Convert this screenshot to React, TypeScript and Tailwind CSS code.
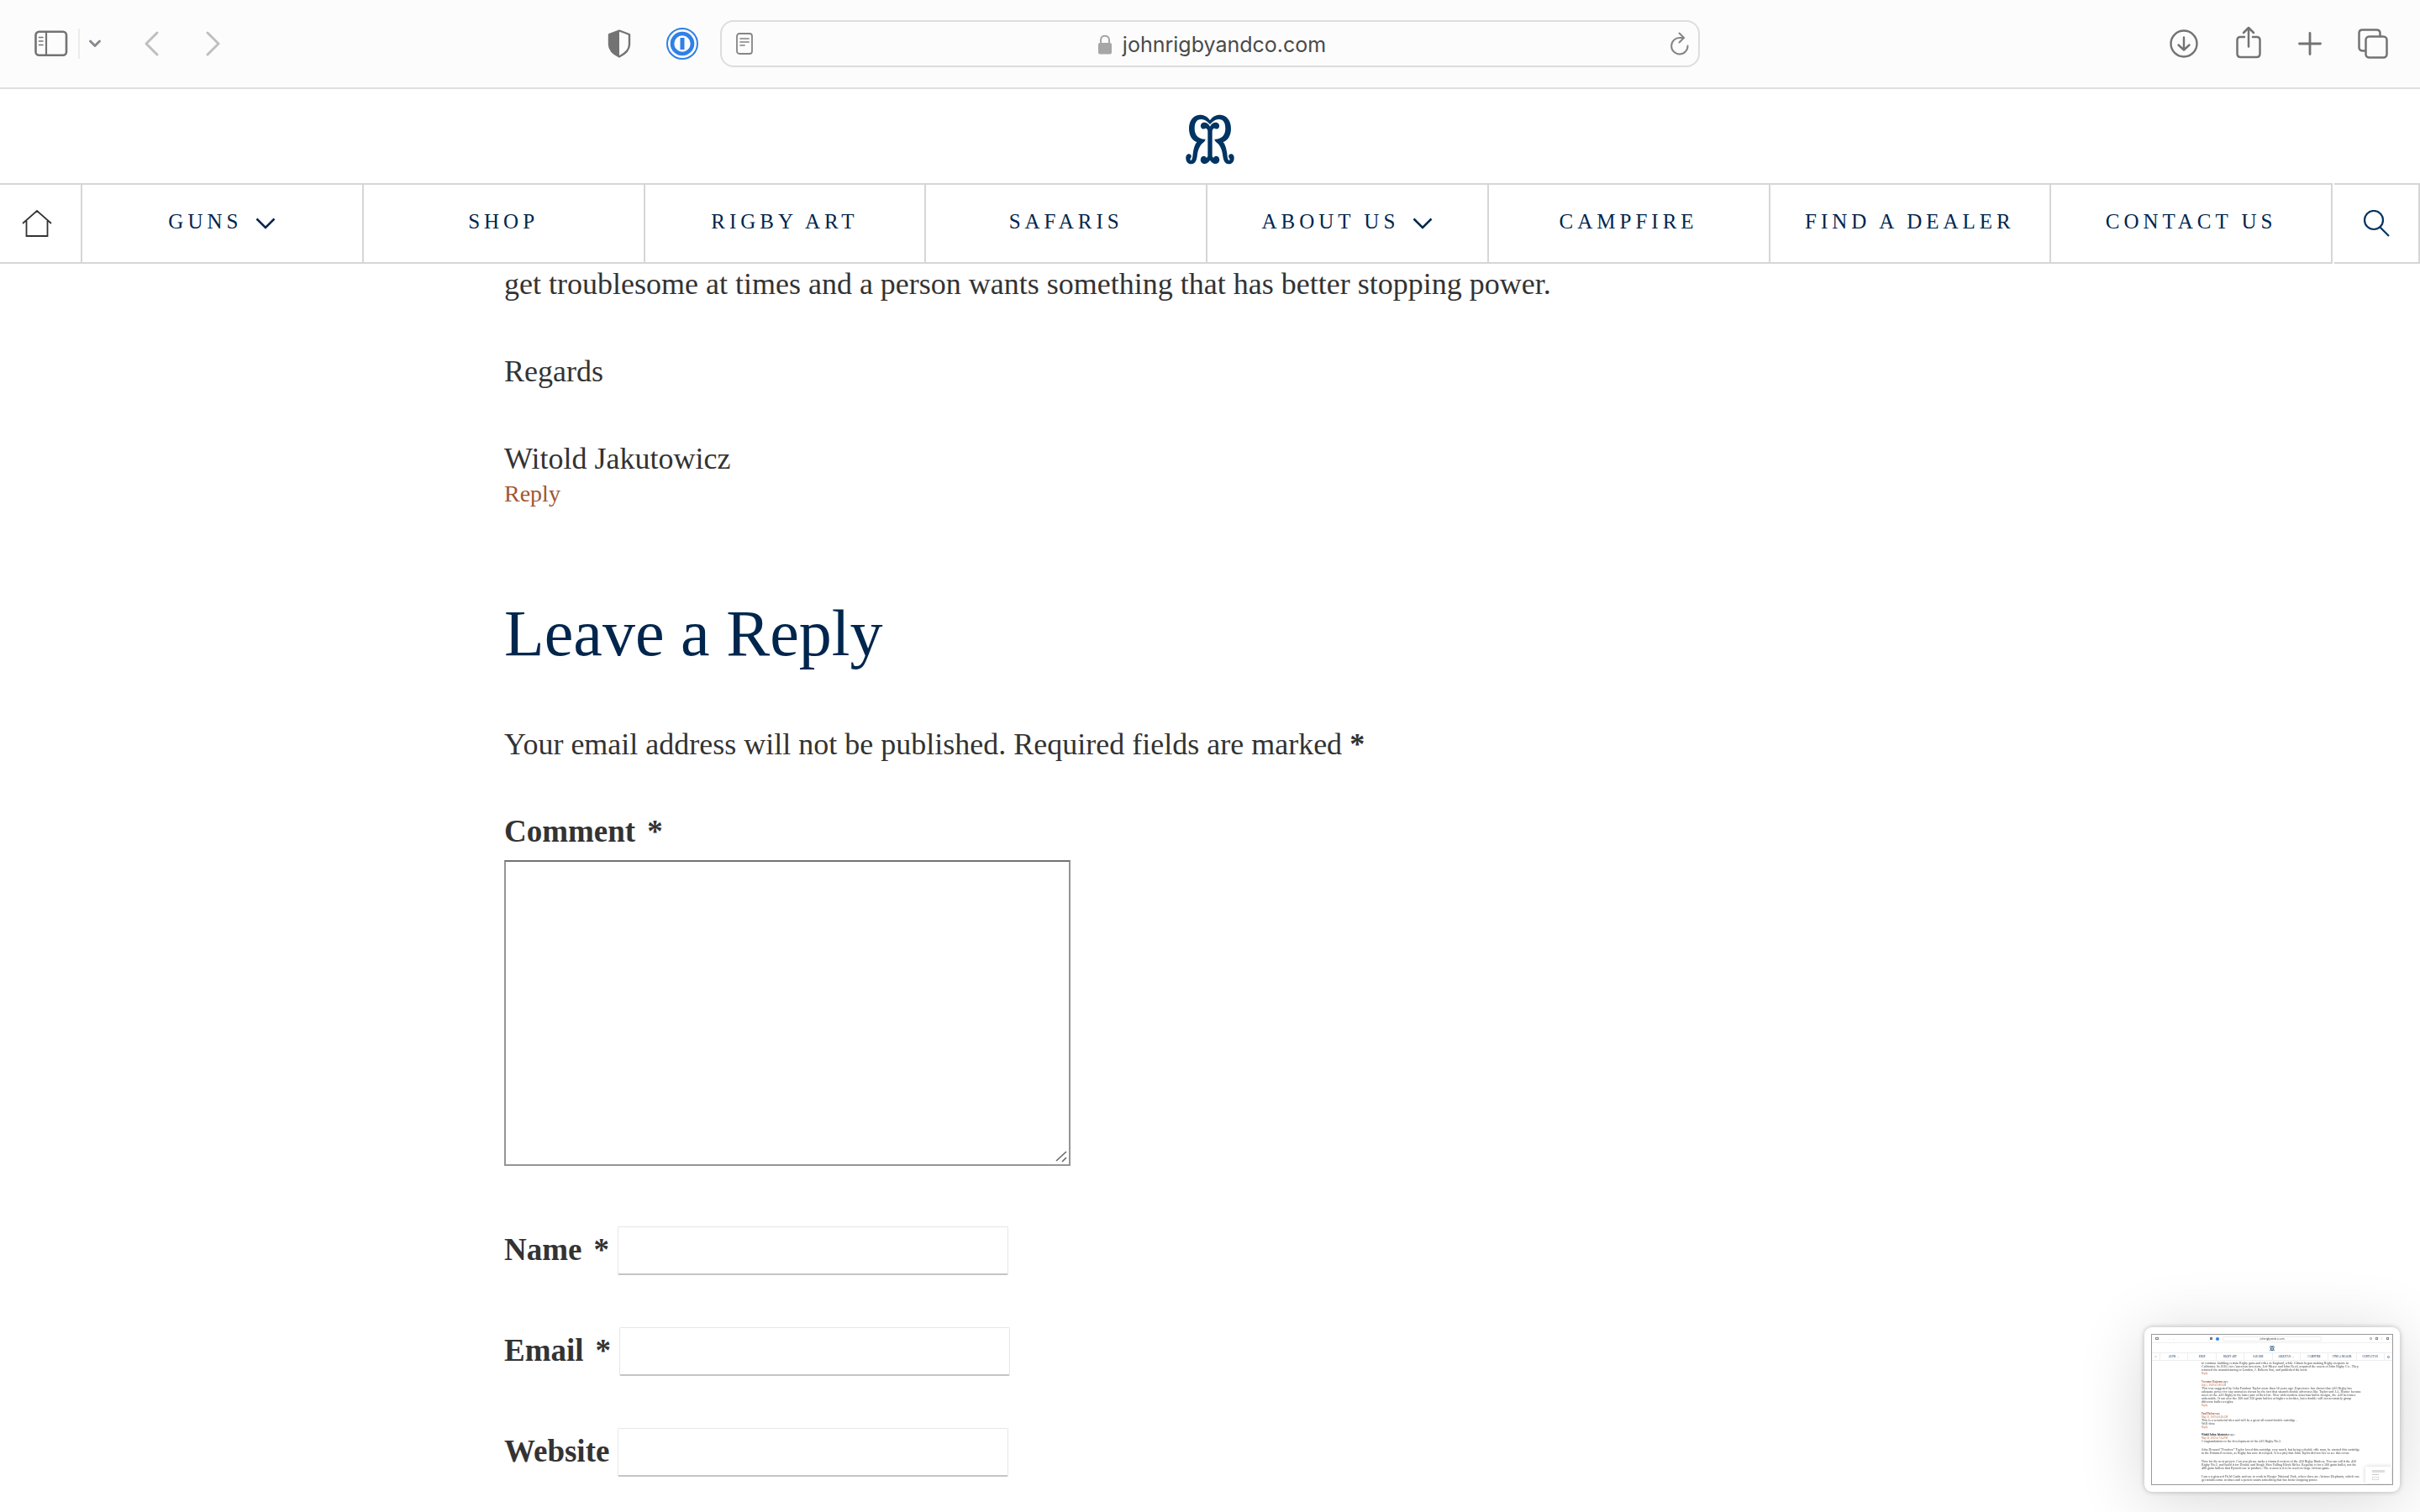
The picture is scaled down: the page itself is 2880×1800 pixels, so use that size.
import React from "react";

const NAV_ITEMS = [
  { label: "GUNS", menu: true },
  { label: "SHOP" },
  { label: "RIGBY ART" },
  { label: "SAFARIS" },
  { label: "ABOUT US", menu: true },
  { label: "CAMPFIRE" },
  { label: "FIND A DEALER" },
  { label: "CONTACT US" },
];

const FIELDS = [
  { id: "author", label: "Name", type: "text", required: true },
  { id: "email", label: "Email", type: "email", required: true },
  { id: "url", label: "Website", type: "url", required: false },
];

// Comments shown on the floating page preview
const PREVIEW_COMMENTS = [
  {
    lines: [
      "to continue building certain Rigby guns and rifles in England, while Gibson began making Rigby weapons in",
      "California. In 2010, two American investors, Jeff Meyer and John Reed, acquired the assets of John Rigby Co.. They",
      "returned the manufacturing to London, J. Roberts Son, and published the book",
    ],
    reply: true,
  },
  {
    author: "Veeramee Rajaram",
    date: "July 1, 2019 at 3:09 AM",
    lines: [
      "This was suggested by John Pondoro Taylor more than 50 years ago. Experience has shown that .416 Rigby has",
      "adequate power for any animal as shown by the fact that staunch double advocates like Taylor and J.A. Hunter became",
      "users of the .416 Rigby in the latter part of their life. Now with modern American bullet designs, the .416 becomes",
      "unbeatable. It can also fire 300 and 350 grain bullets at higher velocities, but a double will not accurately group",
      "different bullet weights.",
    ],
    reply: true,
  },
  {
    author: "Paul Phelan",
    date: "May 31, 2019 at 8:58 AM",
    lines: ["This is a wonderful idea and will be a great all round double cartridge .", "Well done"],
    reply: true,
  },
  {
    author: "Witold Julian Jakutowicz",
    dark: true,
    date: "May 30, 2019 at 7:34 PM",
    lines: ["Congratulations to the development of the 416 Rigby No.2."],
  },
  {
    lines: [
      "John Howard “Pondoro” Taylor loved this cartridge very much, but being a double rifle man, he wanted this cartridge",
      "in the Rimmed version, as Rigby has now developed. It is a pity that John Taylor did not live to see this occur.",
    ],
  },
  {
    lines: [
      "Now for the next project. Can you please make a rimmed version of the 450 Rigby Rimless. You can call it the 450",
      "Rigby No.2, and build it for Double and Single Shot Falling Block Rifles. Regulate it for a 500 grain bullet, not the",
      "480 grain bullets that Kynoch use to produce. The reason is it to be used on large African game.",
    ],
  },
  {
    lines: [
      "I am a registered Field Guide and use to work in Kruger National Park, where there are African Elephants, which can",
      "get troublesome at times and a person wants something that has better stopping power.",
    ],
  },
];

function RigbyLogo({ className }: { className: string }) {
  return (
    <svg className={className} viewBox="96 48 174 180" fill="#003462" aria-hidden="true">
      <RigbyHalf />
      <g transform="matrix(-1 0 0 1 366 0)">
        <RigbyHalf />
      </g>
    </svg>
  );
}

function RigbyHalf() {
  return (
    <>
      <path d="M183 70 C192 55 206 50 220 50 C244 51 258 72 258 98 C258 122 248 141 230 147 C238 157 242 172 244 190 C245 204 247 212 251 213 C255 213 254 208 252 205 C247 200 250 190 258 190 C266 190 270 198 269 207 C268 219 260 227 249 226 C236 225 231 213 229 198 C227 180 222 162 208 150 C204 146 200 143 199 137 C220 139 238 126 238 100 C238 80 232 66 214 66 C202 67 192 74 183 84 Z" />
      <path d="M183 92 C188 81 197 76 205 77 C213 78 218 85 216 93 C214 101 205 103 200 98 C193 98 191 104 191 110 L191 198 C193 203 196 205 198 201 C202 195 213 197 216 206 C219 216 212 225 202 225 C194 225 188 219 183 212 Z" />
    </>
  );
}

function ChevronDown({ className }: { className: string }) {
  return (
    <svg className={className} viewBox="0 0 24 14" fill="none" stroke="currentColor" strokeWidth="2.5" aria-hidden="true">
      <path d="M1.5 1.5 L12 12 L22.5 1.5" />
    </svg>
  );
}

function BrowserToolbar() {
  return (
    <div className="grid h-[106px] grid-cols-[1fr_1166px_1fr] items-center border-b-2 border-[#dedede] bg-[#fcfcfc] text-[#737373]">
      <div className="flex items-center justify-between pl-[41px] pr-[26px]">
        <div className="flex items-center">
          <button type="button" aria-label="Show sidebar">
            <svg className="h-8 w-10" viewBox="0 0 40 32" fill="none" stroke="currentColor" strokeWidth="2.6" strokeLinecap="round">
              <rect x="1.5" y="1.8" width="36.5" height="28" rx="4" />
              <path d="M14 2 V30" strokeWidth="2.2" />
              <path d="M5.5 8.5 H10 M5.5 13 H10 M5.5 17.5 H10" strokeWidth="1.6" />
            </svg>
          </button>
          <span className="ml-3 h-9 w-0.5 bg-[#ececec]" />
          <button type="button" aria-label="Sidebar options" className="ml-[10px]">
            <svg className="h-4 w-4" viewBox="0 0 16 16" fill="none" stroke="#8b8890" strokeWidth="3" strokeLinecap="round" strokeLinejoin="round">
              <path d="M2.5 5 L8 10.5 L13.5 5" />
            </svg>
          </button>
          <button type="button" aria-label="Back" className="ml-[50px] text-[#bfbfbf]">
            <svg className="h-8 w-5" viewBox="0 0 20 32" fill="none" stroke="currentColor" strokeWidth="3" strokeLinecap="round" strokeLinejoin="round">
              <path d="M16 3 L3 16 L16 29" />
            </svg>
          </button>
          <button type="button" aria-label="Forward" className="ml-[52px] text-[#bfbfbf]">
            <svg className="h-8 w-5" viewBox="0 0 20 32" fill="none" stroke="currentColor" strokeWidth="3" strokeLinecap="round" strokeLinejoin="round">
              <path d="M4 3 L17 16 L4 29" />
            </svg>
          </button>
        </div>
        <div className="flex items-center gap-[42px]">
          <button type="button" aria-label="Privacy report">
            <svg className="h-9 w-7" viewBox="0 0 28 36">
              <path d="M14 2.5 L2 7 V19 C2 26 8 30.5 14 33.5 C20 30.5 26 26 26 19 V7 Z" fill="none" stroke="currentColor" strokeWidth="2.4" strokeLinejoin="round" />
              <path d="M14 2.5 L2 7 V19 C2 26 8 30.5 14 33.5 Z" fill="currentColor" />
            </svg>
          </button>
          <button type="button" aria-label="Password manager">
            <svg className="h-[38px] w-[38px]" viewBox="0 0 38 38" fill="none" stroke="#2f80e8">
              <circle cx="19" cy="19" r="18" strokeWidth="2" />
              <circle cx="19" cy="19" r="12" strokeWidth="4.6" />
              <rect x="16.5" y="12" width="5" height="14" fill="#2f80e8" stroke="none" />
            </svg>
          </button>
        </div>
      </div>

      <div className="flex h-14 items-center justify-between rounded-2xl border-2 border-[#dddddd] pr-[11px] pl-[17px]">
        <button type="button" aria-label="Show reader">
          <svg className="h-[26px] w-5" viewBox="0 0 20 26" fill="none" stroke="#858585" strokeWidth="1.8" strokeLinecap="round">
            <rect x="1" y="1" width="18" height="24" rx="3" />
            <path d="M5 7 H15 M5 11 H15 M5 15 H10" stroke="#a0a0a0" />
          </svg>
        </button>
        <div className="flex items-center gap-3 pt-0.5">
          <svg className="h-6 w-[18px]" viewBox="0 0 18 24" aria-hidden="true">
            <path d="M4 11 V6.5 C4 0 14 0 14 6.5 V11" fill="none" stroke="#a6a6a6" strokeWidth="2" />
            <rect x="1" y="10" width="16" height="13.5" rx="2" fill="#a6a6a6" />
          </svg>
          <span className="font-['Inter',sans-serif] text-[25px] leading-8 text-[#4a4a4a]">johnrigbyandco.com</span>
        </div>
        <button type="button" aria-label="Reload">
          <svg className="h-7 w-[22px]" viewBox="0 0 22 28" fill="none" stroke="#858585" strokeWidth="2" strokeLinecap="round" strokeLinejoin="round">
            <path d="M20.5 16.5 A9.7 9.7 0 1 1 11 7 H15.5" />
            <path d="M10.5 1.5 L16 7 L10.5 12.5" />
          </svg>
        </button>
      </div>

      <div className="flex items-center justify-end gap-[43px] pr-[38px]">
        <button type="button" aria-label="Downloads">
          <svg className="h-9 w-9" viewBox="0 0 36 36" fill="none" stroke="currentColor" strokeWidth="2.4" strokeLinecap="round" strokeLinejoin="round">
            <circle cx="18" cy="18" r="15.5" />
            <path d="M18 10.5 V25.5 M11.5 19.5 L18 25.5 L24.5 19.5" />
          </svg>
        </button>
        <button type="button" aria-label="Share">
          <svg className="h-[42px] w-8" viewBox="0 0 32 42" fill="none" stroke="currentColor" strokeWidth="2.5" strokeLinecap="round" strokeLinejoin="round">
            <path d="M11 13 H6 C4 13 2.5 14.5 2.5 16.5 V33 C2.5 35.5 4 37 6.5 37 H25.5 C28 37 29.5 35.5 29.5 33 V16.5 C29.5 14.5 28 13 26 13 H21" />
            <path d="M16 24.5 V2.5 M10 8 L16 2 L22 8" />
          </svg>
        </button>
        <button type="button" aria-label="New tab">
          <svg className="h-7 w-7" viewBox="0 0 28 28" fill="none" stroke="currentColor" strokeWidth="2.8" strokeLinecap="round">
            <path d="M14 1.5 V26.5 M1.5 14 H26.5" />
          </svg>
        </button>
        <button type="button" aria-label="Tab overview">
          <svg className="h-9 w-9" viewBox="0 0 36 36" fill="none" stroke="currentColor" strokeWidth="2.5" strokeLinejoin="round">
            <rect x="9.5" y="9.5" width="25" height="25" rx="4" />
            <path d="M9 26.5 H6 C3.5 26.5 1.5 25 1.5 22.5 V5.5 C1.5 3 3 1.5 5.5 1.5 H22 C25 1.5 26.5 3 26.5 5.5 V9" />
          </svg>
        </button>
      </div>
    </div>
  );
}

function SiteHeader() {
  return (
    <header className="relative z-10 bg-white">
      <div className="flex h-28 items-center justify-center pt-2">
        <a href="#" aria-label="John Rigby & Co." className="block">
          <RigbyLogo className="h-[60px] w-[58px]" />
        </a>
      </div>
      <nav className="flex h-24 gap-0.5 text-[#00264d]">
        <div className="flex min-w-0 flex-1 border-y-2 border-[#d6d6d6]">
          <a href="#" aria-label="Home" className="flex w-[98px] shrink-0 items-center border-r-2 border-[#d6d6d6] pl-[26px]">
            <svg className="h-9 w-9" viewBox="0 0 36 36" fill="none" stroke="#333333" strokeWidth="1.8">
              <path d="M1 18 L18 3 L35 18 M5.5 15 V33 H30.5 V15" />
            </svg>
          </a>
          {NAV_ITEMS.map((item) => (
            <a
              key={item.label}
              href="#"
              className="flex min-w-0 flex-1 items-center justify-center gap-4 border-r-2 border-[#d6d6d6] pb-1 text-[25px] leading-8 tracking-[5px] whitespace-nowrap"
            >
              {item.label}
              {item.menu && <ChevronDown className="mt-1 h-[14px] w-6" />}
            </a>
          ))}
        </div>
        <button type="button" aria-label="Search" className="flex w-[102px] shrink-0 items-center justify-center border-2 border-l-0 border-[#d6d6d6]">
          <svg className="h-8 w-8" viewBox="0 0 32 32" fill="none" stroke="#003462" strokeWidth="2.2">
            <circle cx="13" cy="12" r="11" />
            <path d="M20 20 L31 31" />
          </svg>
        </button>
      </nav>
    </header>
  );
}

function ReplyForm() {
  return (
    <form onSubmit={(e) => e.preventDefault()}>
      <p className="mt-[58px]">
        Your email address will not be published. Required fields are marked <b>*</b>
      </p>
      <label htmlFor="comment" className="mt-[52px] flex gap-[14px] text-[37px] font-bold">
        Comment <span>*</span>
      </label>
      <div className="relative mt-2 w-[674px]">
        <textarea
          id="comment"
          className="block h-[364px] w-full resize-none border-2 border-[#959595] border-t-[#737373] bg-white"
        />
        {/* Resize grip */}
        <svg className="absolute right-1 bottom-1 h-[14px] w-[14px]" viewBox="0 0 14 14" fill="none" stroke="#666666" strokeWidth="1.6" aria-hidden="true">
          <path d="M1 12 L13 1 M8 13 L13 8" />
        </svg>
      </div>
      <div className="mt-[72px] flex flex-col gap-[62px]">
        {FIELDS.map((f) => (
          <div key={f.id} className="flex items-start gap-[10px]">
            <label htmlFor={f.id} className="flex gap-[14px] pt-0.5 text-[37px] font-bold">
              {f.label} {f.required && <span>*</span>}
            </label>
            <input
              id={f.id}
              type={f.type}
              className="h-[58px] w-[465px] rounded-[2px] border border-b-2 border-[#e6e6e6] border-b-[#c4c4c4] bg-white px-3"
            />
          </div>
        ))}
      </div>
    </form>
  );
}

function PagePreview() {
  return (
    <aside className="fixed right-6 bottom-6 z-20 w-[304px] rounded-[9px] bg-white p-2 shadow-[0_0_6px_rgba(0,0,0,0.25),0_10px_80px_rgba(0,0,0,0.16)]">
      <div className="relative flex h-[180px] flex-col overflow-hidden border border-[#999999] text-[#444444]">
        <div className="grid h-[10px] shrink-0 grid-cols-[1fr_118px_1fr] items-center border-b border-[#f0f0f0]">
          <div className="flex items-center gap-1 px-1">
            <span className="h-[3px] w-1 border border-[#888888]" />
            <span className="ml-2 text-[4px] leading-[4px] text-[#bbbbbb]">‹</span>
            <span className="text-[4px] leading-[4px] text-[#bbbbbb]">›</span>
            <span className="ml-auto h-[3px] w-[3px] bg-[#777777]" />
            <span className="h-1 w-1 rounded-full bg-[#2f80e8]" />
          </div>
          <div className="h-[6px] rounded-[2px] border border-[#eeeeee] text-center font-['Inter',sans-serif] text-[3px] leading-[4px]">johnrigbyandco.com</div>
          <div className="flex items-center justify-end gap-1 px-1">
            <span className="h-[3px] w-[3px] rounded-full border border-[#888888]" />
            <span className="h-[3px] w-[3px] border border-[#888888]" />
            <span className="text-[4px] leading-[4px]">+</span>
            <span className="h-[3px] w-[3px] border border-[#888888]" />
          </div>
        </div>
        <div className="flex h-[11px] shrink-0 items-center justify-center">
          <RigbyLogo className="h-[6px] w-[6px]" />
        </div>
        <div className="flex h-[10px] shrink-0 border-y border-[#eeeeee] text-[3px] leading-[8px] text-[#00264d]">
          <span className="w-[9px] text-center">⌂</span>
          {NAV_ITEMS.map((item) => (
            <span key={item.label} className="flex flex-1 items-center justify-center gap-0.5 border-l border-[#eeeeee] whitespace-nowrap">
              {item.label}
              {item.menu && <ChevronDown className="h-[1px] w-0.5" />}
            </span>
          ))}
          <span className="flex w-[10px] items-center justify-center border-l border-[#eeeeee]">
            <span className="h-[3px] w-[3px] rounded-full border border-[#5b7fa3]" />
          </span>
        </div>
        <div className="flex flex-1 flex-col justify-between pt-px pb-[3px] pl-[59px] text-[4px] leading-[4px] whitespace-nowrap">
          {PREVIEW_COMMENTS.map((c) => (
            <div key={c.lines[0]}>
              {c.author && (
                <p className="text-[3px]">
                  <b className={c.dark ? "text-[#222222]" : "text-[#a0562e]"}>{c.author}</b> says:
                </p>
              )}
              {c.date && <p className="text-[3px] text-[#b5653a]">{c.date}</p>}
              {c.lines.map((line) => (
                <p key={line}>{line}</p>
              ))}
              {c.reply && <p className="text-[3px] text-[#b5653a]">Reply</p>}
            </div>
          ))}
        </div>
        <div className="absolute right-px bottom-px flex h-5 w-[31px] flex-col gap-0.5 bg-white px-2 py-1 shadow-[0_0_5px_rgba(0,0,0,0.18)]">
          <span className="h-[3px] bg-[#dddddd]" />
          <span className="h-px w-2 bg-[#cccccc]" />
          <span className="h-1 w-2 border border-[#dddddd]" />
        </div>
      </div>
    </aside>
  );
}

export default function App() {
  return (
    <div className="min-h-screen bg-white font-['Liberation_Serif',serif] text-[#333333]">
      <BrowserToolbar />
      <SiteHeader />

      {/* The page is scrolled, so the text starts slightly under the header */}
      <main className="mx-auto -mt-0.5 max-w-[1680px] text-[36px] leading-[52px]">
        <article className="flex flex-col gap-[52px]">
          <p>get troublesome at times and a person wants something that has better stopping power.</p>
          <p>Regards</p>
          <p>Witold Jakutowicz</p>
        </article>
        <a href="#" className="block text-[28px] leading-8 text-[#a0562e]">
          Reply
        </a>

        <h2 className="mt-[102px] text-[78px] leading-[96px] text-[#00264d]">Leave a Reply</h2>
        <ReplyForm />
      </main>

      <PagePreview />
    </div>
  );
}
